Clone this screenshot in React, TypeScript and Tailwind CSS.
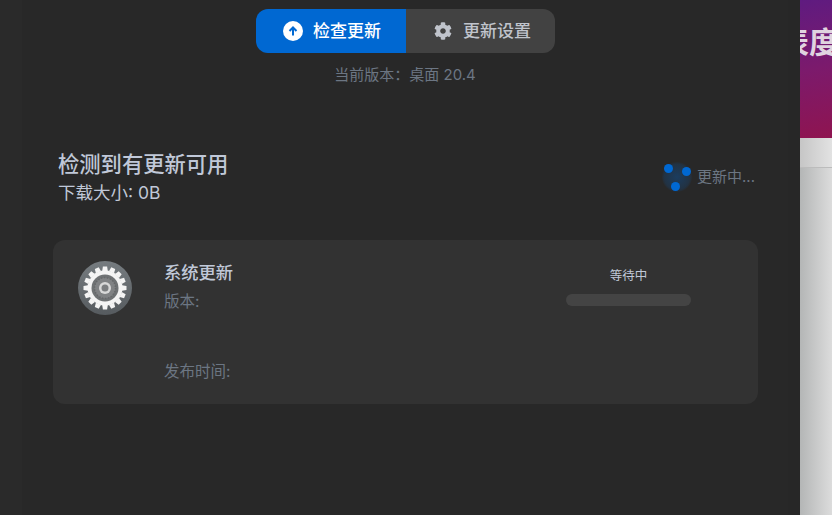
import { FaCog } from 'react-icons/fa';

const font = { fontFamily: 'Inter, "Noto Sans CJK SC", "Noto Sans", sans-serif' };

function GearBadge() {
  const teeth = Array.from({ length: 16 }, (_, i) => (i * 360) / 16);
  return (
    <svg width="56" height="56" viewBox="0 0 56 56" className="shrink-0">
      <defs>
        <linearGradient id="badge" x1="0" y1="0" x2="0" y2="1">
          <stop offset="0" stopColor="#767c80" />
          <stop offset="1" stopColor="#565b5f" />
        </linearGradient>
      </defs>
      <circle cx="28" cy="28" r="27" fill="url(#badge)" />
      {teeth.map((a) => (
        <polygon key={a} points="25.2,11 25.900,6.500 30.100,6.500 30.800,11" fill="#f4f4f4" transform={`rotate(${a} 28 28)`} />
      ))}
      <circle cx="28" cy="28" r="17.500" fill="#f4f4f4" />
      <circle cx="28" cy="28" r="13.500" fill="#6f7274" />
      <circle cx="28" cy="28" r="10.500" fill="#808284" stroke="#66686a" strokeWidth="1.500" strokeDasharray="1.500 1.500" />
      <circle cx="28" cy="28" r="6" fill="#d8d8d8" />
      <circle cx="28" cy="28" r="3.500" fill="#7c7e80" />
    </svg>
  );
}

function Spinner() {
  return (
    <div className="relative w-[30px] h-[30px] rounded-full bg-[radial-gradient(circle,rgba(0,104,210,0.32)_0%,rgba(0,104,210,0.16)_60%,transparent_74%)]">
      <span className="absolute left-[1.500px] top-[2.500px] w-[9px] h-[9px] rounded-full bg-[#0068d2]" />
      <span className="absolute left-[19.500px] top-[5.500px] w-[9px] h-[9px] rounded-full bg-[#0068d2]" />
      <span className="absolute left-[8.500px] top-[20.500px] w-[9px] h-[9px] rounded-full bg-[#0068d2]" />
    </div>
  );
}

export default function App() {
  return (
    <div className="flex w-[832px] h-[515px] overflow-hidden" style={font}>
      <div className="w-[800px] h-full bg-[#282828] flex">
        <div className="w-[22px] h-full bg-[#2a2a2a] shrink-0" />
        <div className="flex-1 flex flex-col">
          <div className="flex justify-center pt-[9px]">
            <div className="flex h-11 rounded-xl overflow-hidden text-[17px] leading-none font-medium">
              <button className="w-[150px] pl-[3px] bg-[#0068d2] text-white flex items-center justify-center gap-[10px]">
                <span className="w-5 h-5 rounded-full bg-white flex items-center justify-center">
                  <svg width="12" height="12" viewBox="0 0 12 12" fill="none" stroke="#0068d2" strokeWidth="2">
                    <path d="M6 10.500V2.500M2.500 6L6 2.500L9.500 6" />
                  </svg>
                </span>
                检查更新
              </button>
              <button className="w-[149px] pl-[5px] bg-[#424242] text-[#c0c4cc] flex items-center justify-center gap-[11px]">
                <FaCog size={18} color="#c0c4cc" />
                更新设置
              </button>
            </div>
          </div>

          <p className="mt-[12px] text-center text-[15px] leading-5 text-[#6c7683]">当前版本：桌面 20.4</p>

          <div className="flex items-center justify-between mt-[65px] pl-[36px] pr-[33px]">
            <div>
              <h2 className="text-[21.300px] leading-7 font-medium text-[#c0c8d8]">检测到有更新可用</h2>
              <p className="text-[17.500px] leading-6 mt-[3px] text-[#c0c8d8]">下载大小: 0B</p>
            </div>
            <div className="flex items-center gap-[5px] -mt-[2px]">
              <Spinner />
              <span className="text-[15px] leading-5 text-[#6c7683]">更新中...</span>
            </div>
          </div>

          <div className="ml-[31px] mr-[30px] mt-[35px] h-[164px] rounded-xl bg-[#323232] flex pl-[24px] pt-[20px]">
            <GearBadge />
            <div className="ml-[31px] w-[330px] flex flex-col">
              <p className="text-[17.300px] leading-6 font-medium text-[#c0c8d8] mt-[1px]">系统更新</p>
              <p className="text-[15.500px] leading-5 text-[#6c7683] mt-[7px]">版本:</p>
              <p className="text-[15.500px] leading-5 text-[#6c7683] mt-[50px]">发布时间:</p>
            </div>
            <div className="ml-[72px] w-[125px] flex flex-col items-center">
              <p className="text-[12.500px] leading-4 text-[#c0c8d8] mt-[8px]">等待中</p>
              <div className="w-full h-3 rounded-md bg-[#444444] mt-[10px]" />
            </div>
          </div>
        </div>
        <div className="w-[12px] h-full bg-[#272727] shrink-0" />
      </div>

      <div className="w-[32px] h-full flex flex-col bg-[#e4e4e4]">
        <div className="h-[138px] bg-[linear-gradient(170deg,#5f1b80_0%,#7c1a6c_50%,#8f1450_100%)] overflow-hidden pt-[22px]">
          <p className="text-[30px] leading-10 font-bold text-[#e0d4e0] whitespace-nowrap -ml-[21px]">表度</p>
        </div>
        <div className="h-[30px] bg-[linear-gradient(90deg,#c6c6c6,#e2e2e2)] border-b border-[#bcbcbc]" />
        <div className="flex-1 bg-[linear-gradient(90deg,#b4b6b6,#dcdcdc)]" />
      </div>
    </div>
  );
}
